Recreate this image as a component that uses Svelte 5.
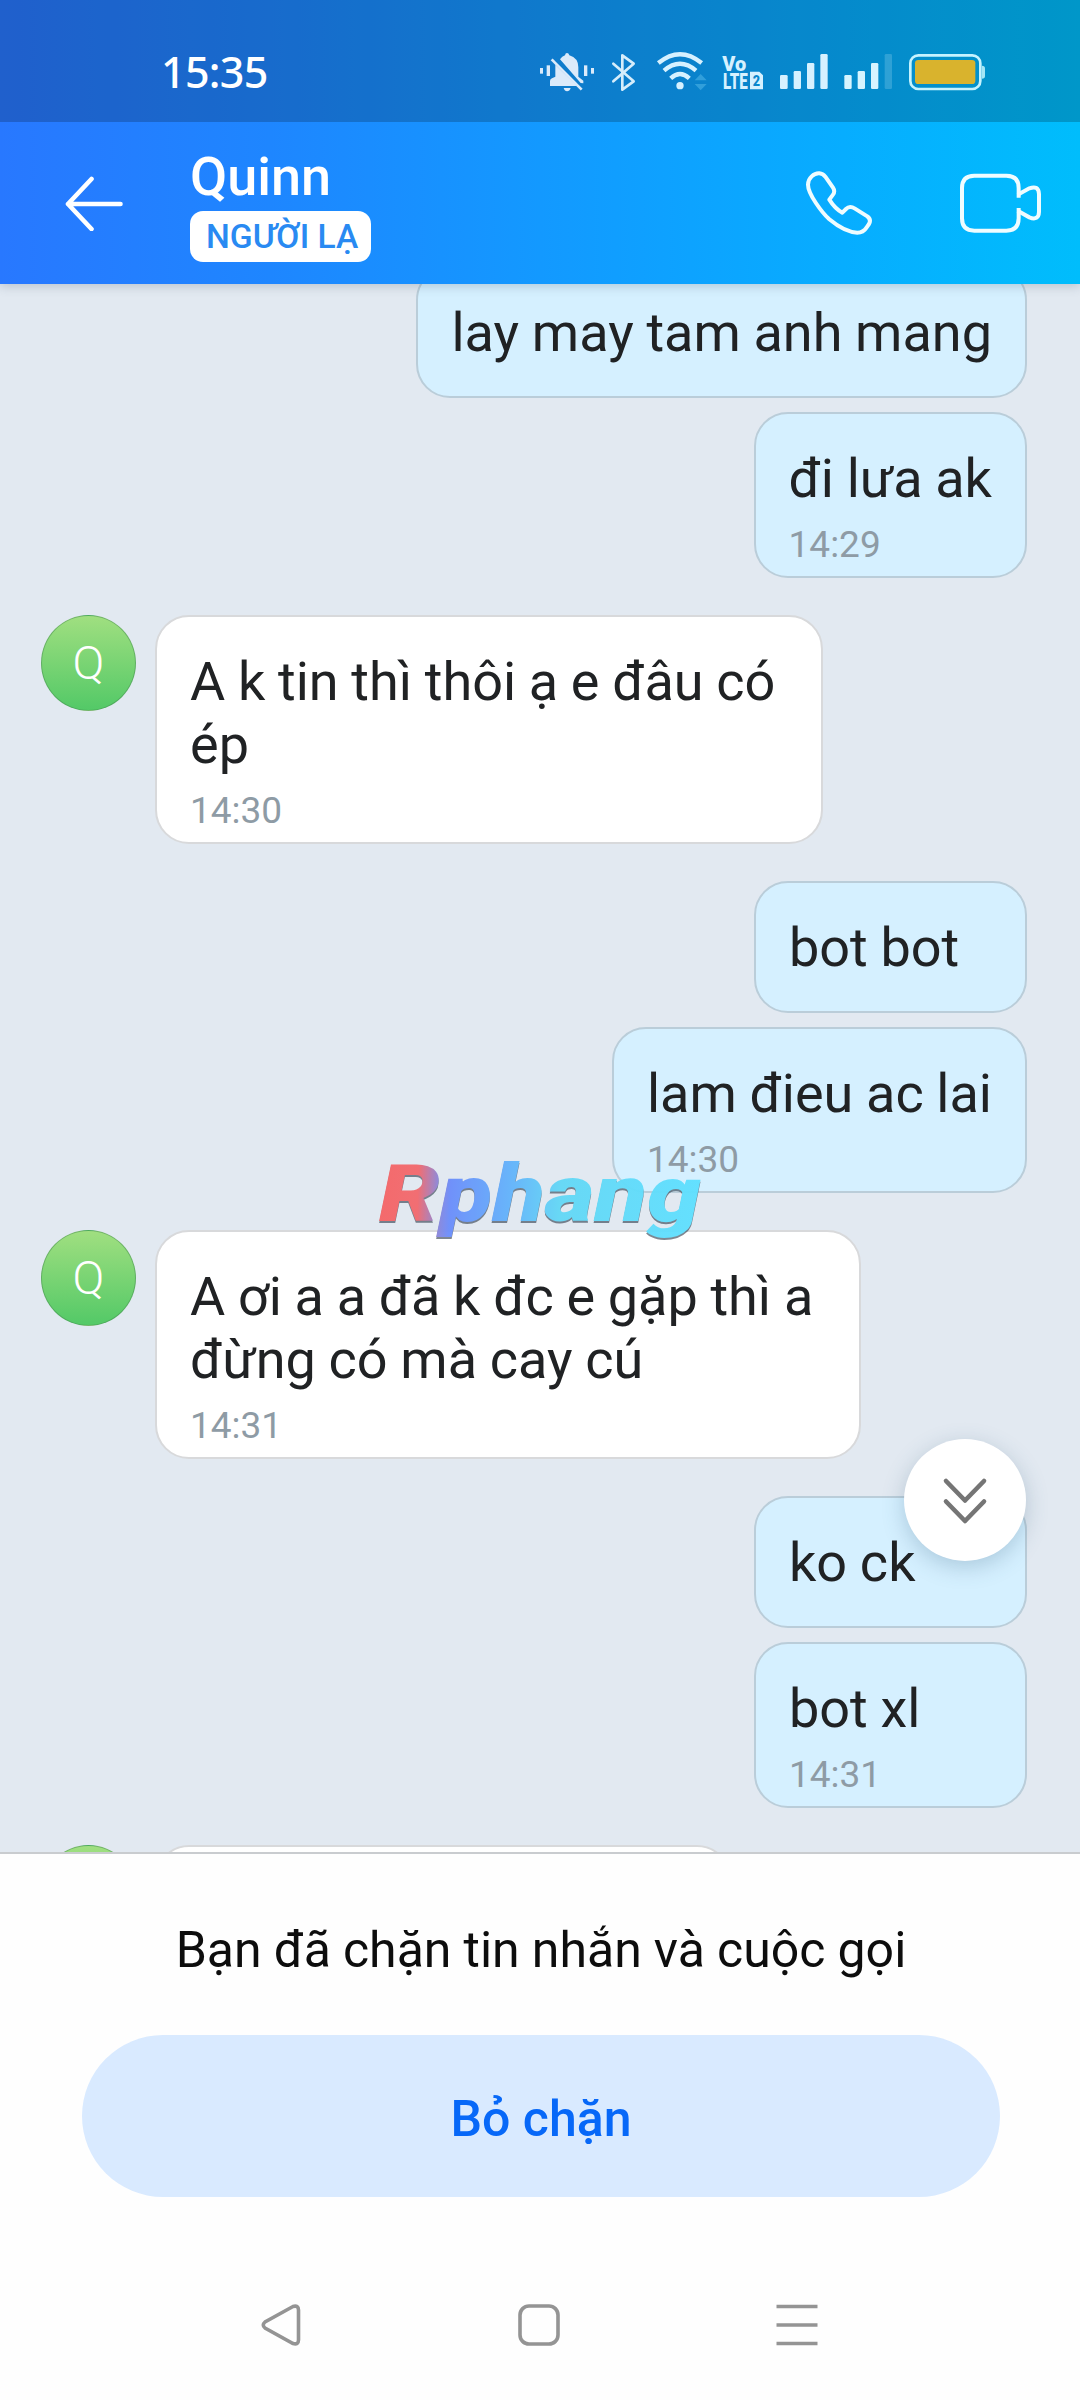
<script lang="ts">
    interface Message {
        id: number;
        lines: string[];
        time?: string;
    }

    interface Group {
        id: number;
        from: "me" | "them";
        messages: Message[];
    }

    const contact = { name: "Quinn", initial: "Q", badge: "NGƯỜI LẠ" };

    const groups: Group[] = [
        {
            id: 1,
            from: "me",
            messages: [
                { id: 1, lines: ["lay may tam anh mang"] },
                { id: 2, lines: ["đi lưa ak"], time: "14:29" },
            ],
        },
        {
            id: 2,
            from: "them",
            messages: [
                {
                    id: 3,
                    lines: ["A k tin thì thôi ạ e đâu có ", "ép"],
                    time: "14:30",
                },
            ],
        },
        {
            id: 3,
            from: "me",
            messages: [
                { id: 4, lines: ["bot bot"] },
                { id: 5, lines: ["lam đieu ac lai"], time: "14:30" },
            ],
        },
        {
            id: 4,
            from: "them",
            messages: [
                {
                    id: 6,
                    lines: ["A ơi a a đã k đc e gặp thì a ", "đừng có mà cay cú"],
                    time: "14:31",
                },
            ],
        },
        {
            id: 5,
            from: "me",
            messages: [
                { id: 7, lines: ["ko ck"] },
                { id: 8, lines: ["bot xl"], time: "14:31" },
            ],
        },
        { id: 6, from: "them", messages: [{ id: 9, lines: [] }] },
    ];
</script>

<div class="phone">
    <div class="top">
        <div class="status">
            <span class="status__time">15:35</span>
            <div class="status__icons">
                <!-- muted bell -->
                <svg width="58" height="41" viewBox="54 63 174 123">
                    <g fill="#dbeafa">
                        <rect x="60" y="114" width="9" height="17" />
                        <rect x="80" y="106" width="10" height="32" />
                        <rect x="192" y="106" width="10" height="32" />
                        <rect x="213" y="114" width="9" height="17" />
                        <path d="M120 88Q126 79 135 76Q136 69 141 69Q146 69 148 76Q175 84 175 112V140L190 152V160L182 159Z" />
                        <path d="M106 104L171 168H90V153Q90 147 96 145L106 140Z" />
                        <path d="M131 174H152Q149 184 141 184Q134 184 131 174Z" />
                    </g>
                    <path d="M95 88L185 179" stroke="#dbeafa" stroke-width="8" />
                </svg>
                <!-- bluetooth -->
                <svg width="30" height="41" viewBox="273 63 90 123">
                    <path d="M280 101L341 154L307 179V76L341 101L280 154" fill="none" stroke="#d5edfb" stroke-width="8" stroke-linejoin="round" stroke-linecap="round" />
                </svg>
                <!-- wifi -->
                <svg width="51" height="41" viewBox="408 63 153 123">
                    <g fill="none" stroke="#d6f1ff" stroke-width="13">
                        <path d="M415 99Q480 46 545 99" />
                        <path d="M432 122Q480 81 528 122" />
                        <path d="M452 145Q480 119 508 145" />
                    </g>
                    <circle cx="480" cy="167" r="11" fill="#d6f1ff" />
                    <path d="M524 151L542 132L560 151ZM524 162H560L542 181Z" fill="#319fdb" />
                </svg>
                <!-- VoLTE -->
                <svg class="volte" width="42" height="41" viewBox="606 63 126 123">
                    <g fill="#d6f1ff">
                        <text x="607" y="122" font-size="62" textLength="72" lengthAdjust="spacingAndGlyphs">Vo</text>
                        <text x="609" y="177" font-size="65" textLength="74" lengthAdjust="spacingAndGlyphs">LTE</text>
                        <path d="M690 125H718L729 136V178H690Z" />
                    </g>
                    <text x="698" y="168" font-size="45" fill="#0a86cc" textLength="22" lengthAdjust="spacingAndGlyphs">2</text>
                </svg>
                <svg width="50" height="41" viewBox="777 63 150 123" fill="#d6f1ff">
                    <rect x="780" y="135" width="23" height="42" rx="4" />
                    <rect x="821" y="123" width="22" height="54" rx="4" />
                    <rect x="861" y="99" width="22" height="78" rx="4" />
                    <rect x="901" y="72" width="22" height="105" rx="4" />
                </svg>
                <svg width="49" height="41" viewBox="972 63 147 123" fill="#d6f4ff">
                    <rect x="973" y="135" width="22" height="42" rx="4" />
                    <rect x="1013" y="123" width="22" height="54" rx="4" />
                    <rect x="1053" y="99" width="22" height="78" rx="4" />
                    <rect x="1094" y="72" width="22" height="105" rx="4" opacity="0.2" />
                </svg>
                <!-- battery -->
                <svg width="78" height="41" viewBox="1164 63 234 123">
                    <rect x="1171" y="76" width="210" height="101" rx="24" fill="none" stroke="#c5f3ff" stroke-width="8" />
                    <rect x="1185" y="90" width="181" height="72" rx="10" fill="#d9b32d" />
                    <path d="M1386 107Q1395 107 1395 115V138Q1395 146 1386 146Z" fill="#a5e6f5" />
                </svg>
            </div>
        </div>

        <header class="header">
            <svg class="header__back" width="60" height="56" viewBox="0 0 60 56" fill="none" stroke="#fff" stroke-width="4.6" stroke-linecap="round" stroke-linejoin="round">
                <path d="M27.500 4L4 29L27.500 54M4 29H56.500" />
            </svg>
            <div class="header__who">
                <h1>{contact.name}</h1>
                <span class="badge">{contact.badge}</span>
            </div>
            <div class="header__actions">
                <svg width="70" height="68" viewBox="192 147 210 204" fill="none" stroke="#effcff" stroke-width="12" stroke-linejoin="round">
                    <path d="M238 160C222 159 204 174 204 194C204 222 246 278 268 298C292 318 325 337 352 338C366 338 373 333 380 322L387 312C392 303 390 295 382 289L345 266C334 259 325 260 318 267L307 278C292 270 278 255 268 239L279 224C284 217 283 209 279 203L256 170Q249 161 238 160Z" />
                </svg>
                <svg width="85" height="68" viewBox="654 147 255 204" fill="none" stroke="#effcff" stroke-width="12">
                    <path d="M836 233V204Q836 167 799 167H703Q666 167 666 204V295Q666 332 703 332H799Q836 332 836 295V264" />
                    <path d="M833 224L868 205Q896 195 897 222V276Q896 303 868 292L833 272" />
                </svg>
            </div>
        </header>
    </div>

    <main class="chat">
        {#each groups as group (group.id)}
            <section class="group group--{group.from}">
                {#if group.from === "them"}
                    <div class="avatar">{contact.initial}</div>
                {/if}
                <div class="group__messages">
                    {#each group.messages as message (message.id)}
                        <article class="bubble" class:bubble--clipped={message.lines.length === 0}>
                            {#each message.lines as line}
                                <p class="bubble__line">{line}</p>
                            {/each}
                            {#if message.time}
                                <time class="bubble__time">{message.time}</time>
                            {/if}
                        </article>
                    {/each}
                </div>
            </section>
        {/each}

        <button class="jump" aria-label="Scroll down">
            <svg width="48" height="50" viewBox="0 0 48 50" fill="none" stroke="#757575" stroke-width="4.6" stroke-linecap="round" stroke-linejoin="round">
                <path d="M5 6L24 25.5L43 6M5 26.5L24 46L43 26.5" />
            </svg>
        </button>

        <svg class="watermark" width="340" height="96" viewBox="0 0 340 96" aria-hidden="true">
            <defs>
                <linearGradient id="mark" gradientUnits="userSpaceOnUse" x1="8" y1="40" x2="332" y2="52">
                    <stop offset="0" stop-color="#f56567" />
                    <stop offset="0.12" stop-color="#f26a6e" />
                    <stop offset="0.18" stop-color="#8f86d6" />
                    <stop offset="0.22" stop-color="#6c8efb" />
                    <stop offset="0.4" stop-color="#64b2fb" />
                    <stop offset="0.56" stop-color="#64d8f6" />
                    <stop offset="1" stop-color="#5fe0ff" />
                </linearGradient>
            </defs>
            <text x="8" y="69" fill="url(#mark)" textLength="322" lengthAdjust="spacingAndGlyphs">Rphang</text>
        </svg>
    </main>

    <footer class="blocked">
        <p>Bạn đã chặn tin nhắn và cuộc gọi</p>
        <button class="blocked__button">Bỏ chặn</button>
    </footer>

    <nav class="nav">
        <svg width="42" height="44" viewBox="0 0 42 44">
            <path d="M33 3.5L5 19Q1.500 22 5 25L33 40.500Q38.500 42 38.500 37V7Q38.500 2 33 3.500Z" />
        </svg>
        <svg width="42" height="44" viewBox="0 0 42 44">
            <rect x="2" y="3" width="38" height="38" rx="9" />
        </svg>
        <svg width="42" height="44" viewBox="0 0 42 44">
            <path d="M0.500 3.500H41.500M0.500 22H41.500M0.500 40.500H41.500" />
        </svg>
    </nav>
</div>

<style>
    :global(body) {
        background: #fff;
    }

    .phone {
        display: flex;
        flex-direction: column;
        width: 1080px;
        height: 2400px;
        overflow: hidden;
        background: #fefefe;
        font-family: Roboto, "Noto Sans", sans-serif;
    }

    h1,
    p {
        margin: 0;
    }

    svg {
        display: block;
        flex: none;
    }

    .top {
        position: relative;
        z-index: 1;
        background: linear-gradient(90deg, #2878ff 0%, #1e86ff 25%, #1399ff 50%, #07adff 78%, #00bdfc 100%);
        box-shadow: 0 2px 10px rgba(60, 80, 100, 0.25);
    }

    .status {
        box-sizing: border-box;
        display: flex;
        align-items: center;
        justify-content: space-between;
        height: 122px;
        padding: 21px 94px 0 161px;
        background: rgba(0, 0, 0, 0.2);
    }

    .status__time {
        font-family: "Noto Sans", sans-serif;
        font-size: 43px;
        font-weight: 500;
        line-height: 50px;
        letter-spacing: -0.7px;
        color: #fff;
    }

    .status__icons {
        display: flex;
        gap: 15px;
    }

    .volte {
        overflow: visible;
        font-family: Roboto, sans-serif;
        font-weight: 900;
    }

    .header {
        box-sizing: border-box;
        display: flex;
        align-items: center;
        height: 162px;
        padding: 0 37px 0 64px;
    }

    .header__who {
        display: flex;
        flex-direction: column;
        align-items: flex-start;
        margin-left: 66px;
    }

    .header__who h1 {
        font-size: 54px;
        font-weight: 500;
        line-height: 63px;
        color: #fff;
    }

    .badge {
        box-sizing: border-box;
        height: 51px;
        margin-top: 3px;
        padding: 0 13px 0 16px;
        border-radius: 13px;
        background: #fff;
        color: #298af2;
        font-size: 33.6px;
        font-weight: 500;
        line-height: 51px;
    }

    .header__actions {
        display: flex;
        gap: 84px;
        margin-left: auto;
    }

    .chat {
        position: relative;
        box-sizing: border-box;
        display: flex;
        flex-direction: column;
        gap: 37px;
        height: 1568px;
        padding: 0 53px 0 41px;
        overflow: hidden;
        background: #e2e9f1;
    }

    .group {
        display: flex;
        flex: none;
        gap: 19px;
    }

    .group:first-child {
        margin-top: -18px;
    }

    .group--me {
        justify-content: flex-end;
    }

    .group__messages {
        display: flex;
        flex-direction: column;
        gap: 14px;
    }

    .group--me .group__messages {
        align-items: flex-end;
    }

    .avatar {
        box-sizing: border-box;
        width: 95px;
        height: 96px;
        border: 1px solid rgba(70, 140, 80, 0.5);
        border-radius: 50%;
        background: linear-gradient(#a0df80, #53c967);
        color: #fff;
        font-size: 47px;
        font-weight: 300;
        line-height: 93px;
        text-align: center;
    }

    .bubble {
        box-sizing: border-box;
        min-width: 273px;
        padding: 33px 33px 32px;
        border: 2px solid #d8d9db;
        border-radius: 34px;
        background: #fff;
        color: #202224;
    }

    .group--me .bubble {
        border-color: #bacdd9;
        background: #d5f0ff;
    }

    .bubble:has(.bubble__time) {
        padding-bottom: 10px;
    }

    .bubble--clipped {
        width: 576px;
        height: 132px;
    }

    .bubble__line {
        font-size: 54px;
        line-height: 63px;
        word-spacing: -0.7px;
        white-space: pre;
    }

    .bubble__time {
        display: block;
        margin-top: 14px;
        font-size: 37px;
        line-height: 42px;
        color: #8e9ba5;
    }

    .jump {
        position: absolute;
        right: 54px;
        bottom: 291px;
        display: flex;
        align-items: center;
        justify-content: center;
        width: 122px;
        height: 122px;
        padding: 0;
        border: 0;
        border-radius: 50%;
        background: #fff;
        box-shadow: 0 6px 22px rgba(60, 100, 130, 0.28);
    }

    .watermark {
        position: absolute;
        top: 868px;
        left: 371px;
        overflow: visible;
        filter: drop-shadow(0 2px 0.5px rgba(50, 65, 80, 0.65));
        opacity: 0.96;
    }

    .watermark text {
        font-size: 80px;
        font-style: italic;
        font-weight: 900;
    }

    .blocked {
        box-sizing: border-box;
        height: 346px;
        padding: 66px 80px 0 82px;
        border-top: 2px solid #c9cccf;
        text-align: center;
    }

    .blocked p {
        font-size: 50px;
        line-height: 60px;
        word-spacing: -0.3px;
        color: #0d0d0d;
    }

    .blocked__button {
        width: 918px;
        height: 162px;
        margin-top: 55px;
        padding: 5px 0 0;
        border: 0;
        border-radius: 81px;
        background: #d9eaff;
        color: #0768f8;
        font: 500 50px/60px Roboto, "Noto Sans", sans-serif;
    }

    .nav {
        display: flex;
        gap: 216px;
        padding: 105px 0 0 260px;
        fill: none;
        stroke: #949494;
        stroke-width: 3.6;
    }
</style>
